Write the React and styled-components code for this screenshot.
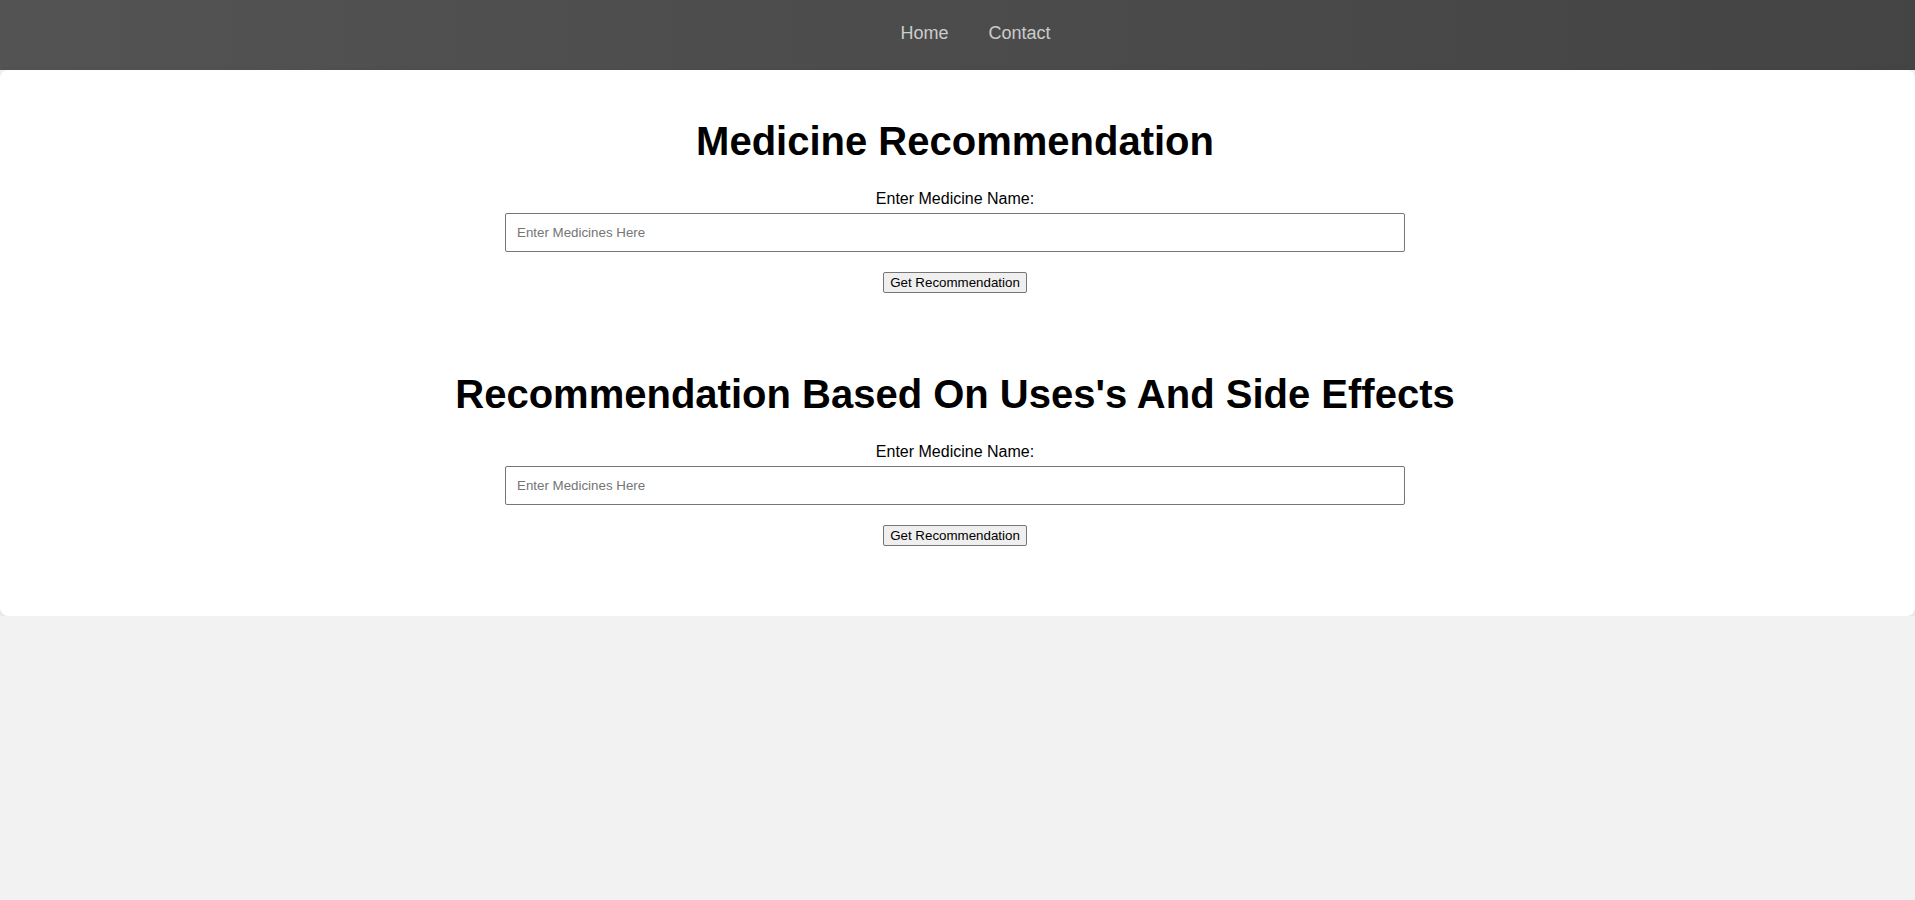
import React from "react";
import styled, { createGlobalStyle } from "styled-components";

const GlobalStyle = createGlobalStyle`
  html, body {
    margin: 0;
    padding: 0;
    background: #f2f2f2;
    font-family: "Liberation Sans", Arial, sans-serif;
  }
  * { box-sizing: border-box; }
`;

const NavBar = styled.nav`
  height: 70px;
  background: linear-gradient(to right, #535353, #444444);
  display: flex;
  justify-content: center;
  align-items: flex-start;
  padding: 23px 0 0 36px;
  gap: 40px;
`;

const NavLink = styled.a`
  color: #cccccc;
  font-size: 18px;
  line-height: 21px;
  text-decoration: none;
  cursor: pointer;
`;

const Card = styled.main`
  background: #ffffff;
  border-radius: 8px;
  box-shadow: 0 2px 6px rgba(0, 0, 0, 0.1);
  padding: 20px 25px 20px 20px;
  display: flex;
  flex-direction: column;
`;

const Section = styled.form`
  display: flex;
  flex-direction: column;
  align-items: center;
  padding-bottom: 50px;
`;

const Title = styled.h1`
  margin: 28px 0 26px;
  font-size: 40px;
  line-height: 46px;
  font-weight: bold;
  color: #000;
  text-align: center;
`;

const Label = styled.label`
  display: block;
  font-size: 16px;
  line-height: 18px;
  color: #000;
  margin-bottom: 5px;
`;

const TextInput = styled.input`
  width: 900px;
  height: 39px;
  padding: 0 11px;
  border: 1px solid #767676;
  border-radius: 2px;
  font-family: "Liberation Sans", Arial, sans-serif;
  font-size: 13.333px;
  color: #000;
  background: #fff;
  margin-bottom: 20px;
  &::placeholder { color: #757575; }
`;

const Button = styled.button`
  font-family: "Liberation Sans", Arial, sans-serif;
  font-size: 13.333px;
  line-height: 15px;
  height: 21px;
  padding: 1px 6px;
  color: #000;
  background: #efefef;
  border: 1px solid #767676;
  border-radius: 2px;
  cursor: pointer;
`;

function RecommendForm({ title, id }) {
  return (
    <Section onSubmit={(e) => e.preventDefault()}>
      <Title>{title}</Title>
      <Label htmlFor={id}>Enter Medicine Name:</Label>
      <TextInput id={id} type="text" placeholder="Enter Medicines Here" />
      <Button type="submit">Get Recommendation</Button>
    </Section>
  );
}

export default function App() {
  return (
    <>
      <GlobalStyle />
      <NavBar>
        <NavLink>Home</NavLink>
        <NavLink>Contact</NavLink>
      </NavBar>
      <Card>
        <RecommendForm id="med1" title="Medicine Recommendation" />
        <RecommendForm id="med2" title="Recommendation Based On Uses's And Side Effects" />
      </Card>
    </>
  );
}
